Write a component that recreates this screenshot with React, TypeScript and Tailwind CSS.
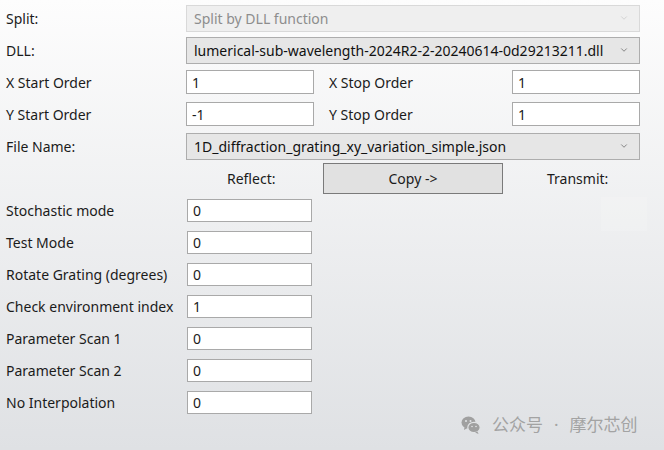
import { ChevronDown } from "lucide-react";

const LOWER = [
  { label: "Stochastic mode", value: "0" },
  { label: "Test Mode", value: "0" },
  { label: "Rotate Grating (degrees)", value: "0" },
  { label: "Check environment index", value: "1" },
  { label: "Parameter Scan 1", value: "0" },
  { label: "Parameter Scan 2", value: "0" },
  { label: "No Interpolation", value: "0" },
];

function Select({ value, disabled }: { value: string; disabled?: boolean }) {
  return (
    <div
      className={`flex h-[27px] w-[454px] items-center justify-between border pl-[7px] pr-[10px] ${
        disabled
          ? "border-[#d9d9d9] bg-[#efefef] text-[#8d8d8d]"
          : "border-[#adadad] bg-[#e6e6e6] text-[#111]"
      }`}
    >
      <span>{value}</span>
      <ChevronDown
        size={10}
        strokeWidth={1.6}
        className={disabled ? "text-[#c4c4c4]" : "text-[#555]"}
      />
    </div>
  );
}

function Field({ value, w, h }: { value: string; w: string; h: string }) {
  return (
    <div className={`flex items-center border border-[#a9a9a9] bg-white pl-[5px] ${w} ${h}`}>
      {value}
    </div>
  );
}

export default function App() {
  return (
    <div
      className="relative h-[450px] w-[664px] overflow-hidden bg-gradient-to-b from-[#fdfdfd] to-[#dfe1e4] pt-[2px] text-[14px] text-[#1b1b1b]"
      style={{ fontFamily: '"Noto Sans", "Noto Sans CJK SC", sans-serif' }}
    >
      <div className="flex h-8 items-center">
        <span className="w-[186px] pl-[6px]">Split:</span>
        <Select value="Split by DLL function" disabled />
      </div>
      <div className="flex h-8 items-center">
        <span className="w-[186px] pl-[6px]">DLL:</span>
        <Select value="lumerical-sub-wavelength-2024R2-2-20240614-0d29213211.dll" />
      </div>
      <div className="flex h-8 items-center">
        <span className="w-[186px] pl-[6px]">X Start Order</span>
        <Field value="1" w="w-[128px]" h="h-[24px]" />
        <span className="w-[198px] pl-[15px]">X Stop Order</span>
        <Field value="1" w="w-[128px]" h="h-[24px]" />
      </div>
      <div className="flex h-8 items-center">
        <span className="w-[186px] pl-[6px]">Y Start Order</span>
        <Field value="-1" w="w-[128px]" h="h-[24px]" />
        <span className="w-[198px] pl-[15px]">Y Stop Order</span>
        <Field value="1" w="w-[128px]" h="h-[24px]" />
      </div>
      <div className="flex h-8 items-center">
        <span className="w-[186px] pl-[6px]">File Name:</span>
        <Select value="1D_diffraction_grating_xy_variation_simple.json" />
      </div>
      <div className="flex h-8 items-center">
        <span className="w-[323px] pl-[227px]">Reflect:</span>
        <button
          type="button"
          className="h-[31px] w-[180px] border border-[#7a7a7a] bg-[#e1e1e1] text-center"
        >
          Copy -&gt;
        </button>
        <span className="pl-[44px]">Transmit:</span>
      </div>
      {LOWER.map((row) => (
        <div key={row.label} className="flex h-8 items-center">
          <span className="w-[187px] pl-[6px]">{row.label}</span>
          <Field value={row.value} w="w-[125px]" h="h-[23px]" />
        </div>
      ))}
      <div className="absolute left-[601px] top-[197px] h-[34px] w-[46px] bg-white/10" />
      <div className="absolute left-[461px] top-[412px] flex items-center text-[17px] text-[#a3a3a3]">
        <svg width="20" height="20" viewBox="0 0 20 20" className="mr-[11px]">
          <ellipse cx="7.5" cy="7.5" rx="7" ry="6" fill="#a0a0a0" />
          <path d="M3.5 12 L3 15 L6.5 13 Z" fill="#a0a0a0" />
          <ellipse cx="13" cy="12.5" rx="6.2" ry="5.2" fill="#a0a0a0" stroke="#e2e4e6" strokeWidth="1.2" />
          <path d="M16.5 16.5 L17.5 19 L14 17.5 Z" fill="#a0a0a0" />
          <circle cx="5" cy="6" r="1" fill="#e2e4e6" />
          <circle cx="9.5" cy="6" r="1" fill="#e2e4e6" />
          <circle cx="11" cy="11.5" r="0.8" fill="#e2e4e6" />
          <circle cx="15" cy="11.5" r="0.8" fill="#e2e4e6" />
        </svg>
        <span>公众号</span>
        <span className="mx-[11px]">·</span>
        <span>摩尔芯创</span>
      </div>
    </div>
  );
}
